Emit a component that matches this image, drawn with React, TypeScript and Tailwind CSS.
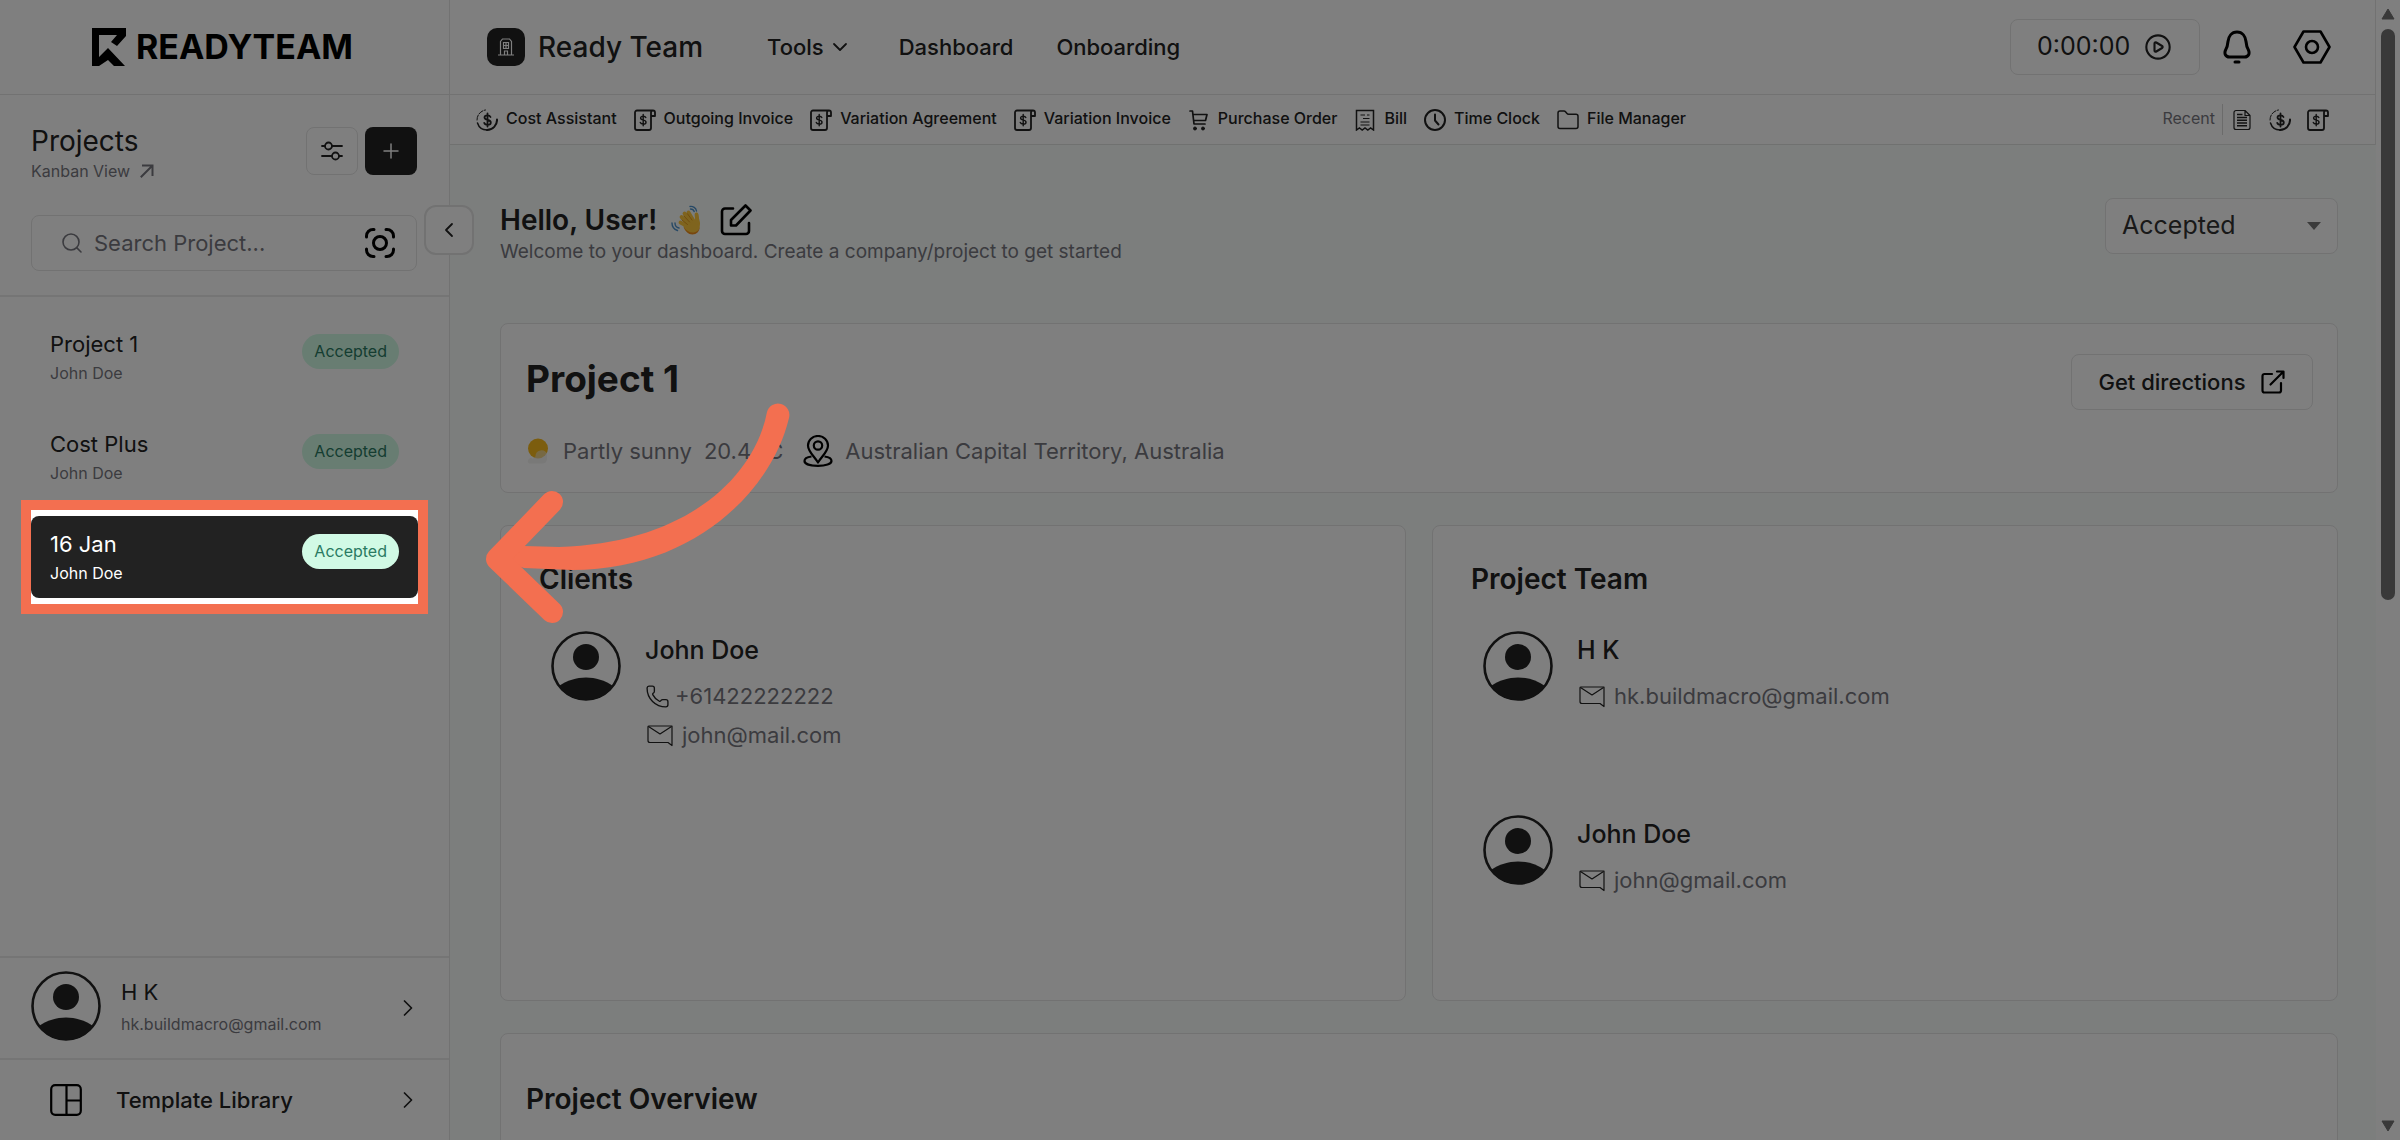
import { ChevronDown, ChevronLeft, ChevronRight, CirclePlay, Phone, Plus, Search } from "lucide-react";
import { clsx } from "clsx";

type IconProps = { className?: string };

const Icons = {
  Logo: ({ className }: IconProps) => (
    <svg viewBox="0 0 34 38" className={className} fill="currentColor">
      <path d="M0 0H34V8L25 18L19 14L25 7H7V29L16 20L33 38H22L16 32L7 38H0Z" />
    </svg>
  ),
  Building: ({ className }: IconProps) => (
    <svg viewBox="0 0 16 18" className={className} fill="none" stroke="currentColor" strokeWidth="1.2">
      <path d="M0 17H16M2.5 17V3.5L4.500 1H11.5L13.500 3.500V17M6.500 17V13H9.500V17M5 4.500H11M5 7.500H11M5 10.500H11M5.500 4V11M8 4V11M10.500 4V11" />
    </svg>
  ),
  ArrowUpRight: ({ className }: IconProps) => (
    <svg viewBox="0 0 14 14" className={className} fill="none" stroke="currentColor" strokeWidth="2" strokeLinecap="square">
      <path d="M1.500 12.500L12 2M3 1.500H12.500V11" />
    </svg>
  ),
  Sliders: ({ className }: IconProps) => (
    <svg viewBox="0 0 22 20" className={className} fill="none" stroke="currentColor" strokeWidth="1.8" strokeLinecap="round">
      <path d="M1 5H4M11 5H21M1 15H11M18 15H21" />
      <circle cx="7.500" cy="5" r="3.500" />
      <circle cx="14.500" cy="15" r="3.500" />
    </svg>
  ),
  Scan: ({ className }: IconProps) => (
    <svg viewBox="0 0 30 30" className={className} fill="none" stroke="currentColor" strokeWidth="3" strokeLinecap="round">
      <path d="M1.500 9V8A6.500 6.500 0 0 1 8 1.500H9M21 1.500H22A6.500 6.500 0 0 1 28.500 8V9M28.500 21V22A6.500 6.500 0 0 1 22 28.500H21M9 28.500H8A6.500 6.500 0 0 1 1.500 22V21" />
      <circle cx="15" cy="15" r="6.500" />
    </svg>
  ),
  Cost: ({ className }: IconProps) => (
    <svg viewBox="0 0 22 22" className={className} fill="none" stroke="currentColor" strokeLinecap="round">
      <path d="M21 10.500A10 10 0 0 1 11 21" strokeWidth="2" />
      <path d="M11 21A10 10 0 0 1 1.500 14" strokeWidth="1.500" />
      <path d="M1 11A10 10 0 0 1 9.500 1" strokeWidth="1" strokeDasharray="5 1.500" />
      <path d="M14.500 8C14 6.800 13 6.300 11.500 6.300C9.800 6.300 8.500 7 8.500 8.600C8.500 12 14.800 10 14.800 13.400C14.800 15 13.300 15.800 11.500 15.800C9.900 15.800 8.600 15.100 8.200 13.800M11.500 4.500V17.500" strokeWidth="1.800" />
    </svg>
  ),
  Invoice: ({ className }: IconProps) => (
    <svg viewBox="0 0 22 22" className={className} fill="none" stroke="currentColor" strokeLinecap="round" strokeLinejoin="round">
      <path d="M19 1.500H3A2 2 0 0 0 1 3.500V19A2 2 0 0 0 3 21H15A2 2 0 0 0 17 19V3.500A2 2 0 0 1 21 3.500V7H17" strokeWidth="1.800" />
      <path d="M11.800 8.500C11.400 7.500 10.500 7.200 9.200 7.200C7.700 7.200 6.600 7.900 6.600 9.100C6.600 12 12 10.300 12 13.200C12 14.500 10.700 15.100 9.200 15.100C7.800 15.100 6.700 14.600 6.300 13.500M9.200 5.500V16.800" strokeWidth="1.400" />
    </svg>
  ),
  Cart: ({ className }: IconProps) => (
    <svg viewBox="0 0 22 22" className={className} fill="none" stroke="currentColor" strokeLinecap="round" strokeLinejoin="round">
      <path d="M2 2H4.500L6 15H17M5 5.500H19L17.500 11.500H6" strokeWidth="1.700" />
      <circle cx="7" cy="19.500" r="1.500" fill="currentColor" />
      <circle cx="15" cy="19.500" r="1.500" fill="currentColor" />
    </svg>
  ),
  Bill: ({ className }: IconProps) => (
    <svg viewBox="0 0 22 22" className={className} fill="none" stroke="currentColor" strokeWidth="1.500">
      <path d="M2.500 21V1.500H19.500V21L16.600 19L13.800 21L11 19L8.200 21L5.400 19Z" />
      <path d="M6.500 6H11M9 9.500H15.500M6.500 13H15.500M13 6H15.500M6.500 16H15.500" strokeWidth="1.200" />
    </svg>
  ),
  Clock: ({ className }: IconProps) => (
    <svg viewBox="0 0 22 22" className={className} fill="none" stroke="currentColor" strokeWidth="2" strokeLinecap="round" strokeLinejoin="round">
      <circle cx="11" cy="11" r="10" />
      <path d="M11 5.500V11.500L14.500 15.500" />
    </svg>
  ),
  Folder: ({ className }: IconProps) => (
    <svg viewBox="0 0 22 22" className={className} fill="none" stroke="currentColor" strokeWidth="1.500" strokeLinejoin="round">
      <path d="M1 4A2 2 0 0 1 3 2H7A2 2 0 0 1 8.500 2.700L10 4.500A2 2 0 0 0 11.500 5.200H19A2 2 0 0 1 21 7.200V17.500A2 2 0 0 1 19 19.500H3A2 2 0 0 1 1 17.500Z" />
    </svg>
  ),
  Document: ({ className }: IconProps) => (
    <svg viewBox="0 0 18 22" className={className} fill="none" stroke="currentColor" strokeWidth="1.200" strokeLinejoin="round">
      <path d="M12 1.500H3A2 2 0 0 0 1 3.500V18.500A2 2 0 0 0 3 20.500H15A2 2 0 0 0 17 18.500V6.500ZM12 1.500V6.500H17" />
      <path d="M4 5.500H9.500M4 8.500H14M4 11.200H14M4 14H14M4 16.800H14" strokeWidth="1.500" />
    </svg>
  ),
  Bell: ({ className }: IconProps) => (
    <svg viewBox="0 0 28 34" className={className} fill="none" stroke="currentColor" strokeWidth="3" strokeLinecap="round" strokeLinejoin="round">
      <path d="M14 2C8.500 2 5.500 6.500 5 11.500C4.600 15.500 4.300 17 2.800 19.500C.800 23.500 2.500 27 6.500 27H21.500C25.500 27 27.200 23.500 25.200 19.500C23.700 17 23.400 15.500 23 11.500C22.500 6.500 19.500 2 14 2Z" />
      <path d="M12 32H16" />
    </svg>
  ),
  Settings: ({ className }: IconProps) => (
    <svg viewBox="0 0 38 34" className={className} fill="none" stroke="currentColor" strokeWidth="2.600" strokeLinejoin="round">
      <path d="M10.500 1.500H27.500L36.500 17L27.500 32.500H10.500L1.500 17Z" />
      <circle cx="19" cy="17" r="6" />
    </svg>
  ),
  Wave: ({ className }: IconProps) => (
    <svg viewBox="0 0 30 30" className={className} fill="none" strokeLinecap="round">
      <path d="M13 23C16 29.500 23 30.500 27 26C28.500 24 29 21 29 18L27 9C26 7 24.500 7.500 24.500 9.500V14L12 19Z" fill="#ffc83d" />
      <path d="M18 22L9.500 17.500M18 19L10.500 12M20 17L13.500 8.500M22 15L17.500 7.500M26.500 18L25.500 9.500" stroke="#ffc83d" strokeWidth="3.800" />
      <path d="M11 15L16.500 19.500M13 11L18.500 17M16.500 8.800L21 15" stroke="#e39a1c" strokeWidth="1" />
      <path d="M12.500 21.500C15 26 19 28 23 27.500C26 27 28 25 29 21.500C28.500 26.500 25.500 29.500 21.500 29.500C17.500 29.500 14 26 12.500 21.500Z" fill="#f08f1f" />
      <path d="M1 18C1 22 3.500 24.500 6.500 25.500M4 18C4 20.500 5.500 22.500 8 23M19 1.500C22 1 25 3 25.500 6M19.500 4C21.500 4 22.700 5 23.200 6.500" stroke="#4f93cc" strokeWidth="1.400" />
    </svg>
  ),
  Edit: ({ className }: IconProps) => (
    <svg viewBox="0 0 32 32" className={className} fill="none" stroke="currentColor" strokeWidth="2.600" strokeLinecap="round" strokeLinejoin="round">
      <path d="M13 4.500H5A3 3 0 0 0 2 7.500V27A3 3 0 0 0 5 30H26A3 3 0 0 0 29 27V19" />
      <path d="M11 21.500V16L25.500 1.500L30.500 6.500L16 21.500Z" />
    </svg>
  ),
  PartlySunny: ({ className }: IconProps) => (
    <svg viewBox="0 0 24 28" className={className}>
      <circle cx="12" cy="11.500" r="10" fill="#f8bb1c" />
      <path d="M3 26.500A3 3 0 0 1 7 22A4 4 0 0 1 9.500 19.500A6 6 0 0 1 21 17V22A5 5 0 0 1 16 26.500Z" fill="#e8e8e4" opacity="0.55" />
    </svg>
  ),
  Pin: ({ className }: IconProps) => (
    <svg viewBox="0 0 30 32" className={className} fill="none" stroke="currentColor" strokeWidth="2.200" strokeLinejoin="round">
      <path d="M15 27.500C11 21 5 16.500 5 10.500A10 9.500 0 0 1 25 10.500C25 16.500 19 21 15 27.500Z" />
      <circle cx="15" cy="10.500" r="4.200" />
      <path d="M8.500 21.500C4 22 1.500 23.800 1.500 26C1.500 29 7.500 30.800 15 30.800C22.500 30.800 28.500 29 28.500 26C28.500 23.800 26 22 21.500 21.500" />
    </svg>
  ),
  External: ({ className }: IconProps) => (
    <svg viewBox="0 0 24 24" className={className} fill="none" stroke="currentColor" strokeWidth="2.200" strokeLinecap="round" strokeLinejoin="round">
      <path d="M11 4H3.500A2 2 0 0 0 1.500 6V20.500A2 2 0 0 0 3.500 22.500H18A2 2 0 0 0 20 20.500V13" />
      <path d="M9.500 14.500L22 2M16 1.500H22.500V8" />
    </svg>
  ),
  Mail: ({ className }: IconProps) => (
    <svg viewBox="0 0 26 22" className={className} fill="none" stroke="currentColor" strokeWidth="1.200" strokeLinejoin="round">
      <path d="M25 1H2A1 1 0 0 0 1 2V15.500A2 2 0 0 0 3 17.500H21L25 20.500Z" />
      <path d="M1.500 1.500L13 9L24.500 1.500" />
    </svg>
  ),
  Template: ({ className }: IconProps) => (
    <svg viewBox="0 0 32 32" className={className} fill="none" stroke="currentColor" strokeWidth="2.200">
      <rect x="1.200" y="1.200" width="29.600" height="29.600" rx="4" />
      <path d="M16.500 1V31M16.500 16.500H31" />
    </svg>
  ),
};

const Avatar = ({ className }: IconProps) => (
  <svg viewBox="0 0 70 70" className={clsx("size-[70px] shrink-0 text-[#222]", className)} fill="currentColor">
    <circle cx="35" cy="35" r="33.500" fill="none" stroke="currentColor" strokeWidth="2.600" />
    <circle cx="35" cy="26" r="13" />
    <path d="M8 55C24 43.500 46 43.500 62 55C55 65 46 69 35 69C24 69 15 65 8 55Z" />
  </svg>
);

const projects = [
  { name: "Project 1", client: "John Doe", status: "Accepted" },
  { name: "Cost Plus", client: "John Doe", status: "Accepted" },
  { name: "16 Jan", client: "John Doe", status: "Accepted", active: true },
];

const shortcuts = [
  { label: "Cost Assistant", Icon: Icons.Cost },
  { label: "Outgoing Invoice", Icon: Icons.Invoice },
  { label: "Variation Agreement", Icon: Icons.Invoice },
  { label: "Variation Invoice", Icon: Icons.Invoice },
  { label: "Purchase Order", Icon: Icons.Cart },
  { label: "Bill", Icon: Icons.Bill },
  { label: "Time Clock", Icon: Icons.Clock },
  { label: "File Manager", Icon: Icons.Folder },
];

const recents = [
  { label: "Document", Icon: Icons.Document },
  { label: "Cost Assistant", Icon: Icons.Cost },
  { label: "Outgoing Invoice", Icon: Icons.Invoice },
];

// dims the whole page around the current project and points at it
const Spotlight = () => (
  <div className="pointer-events-none absolute -inset-x-[10px] -inset-y-4 z-50 border-10 border-[#f36f50] shadow-[0_0_0_4000px_rgba(0,0,0,0.5)]">
    <svg viewBox="0 0 308 226" className="absolute top-[-110px] left-[453px] h-[226px] w-[308px]">
      <path d="M283 12C271 75 205 143 75 147L40 146L13 159L40 168L88 170C210 170 288 90 305 18A11.200 11.200 0 0 0 283 12Z" fill="#f36f50" />
      <path d="M68 102L13 159L68 212" fill="none" stroke="#f36f50" strokeWidth="22" strokeLinecap="round" strokeLinejoin="round" />
    </svg>
  </div>
);

const Sidebar = () => (
  <aside className="relative z-10 flex w-[450px] shrink-0 flex-col border-r border-[#e4e4e4] bg-white">
    <div className="flex h-[95px] shrink-0 items-center justify-center gap-[10px] border-b border-[#e4e4e4] pr-1 text-black">
      <Icons.Logo className="h-[38px] w-[34px]" />
      <span className="text-[34px] leading-none font-bold">READYTEAM</span>
    </div>

    <div className="border-b-2 border-[#ebebeb] pt-8 pr-8 pb-6 pl-[31px]">
      <div className="flex justify-between">
        <div>
          <h2 className="text-[28px] leading-7">Projects</h2>
          <a href="#kanban" className="flex items-center gap-[10px] text-base leading-8 text-[#77777f]">
            Kanban View <Icons.ArrowUpRight className="size-[14px]" />
          </a>
        </div>
        <div className="flex items-start gap-[7px]">
          <button type="button" aria-label="Filter projects" className="flex h-12 w-[52px] items-center justify-center rounded-lg border border-[#e4e4e4]">
            <Icons.Sliders className="h-5 w-[22px]" />
          </button>
          <button type="button" aria-label="Add project" className="flex h-12 w-[52px] items-center justify-center rounded-lg bg-[#222] text-white">
            <Plus className="size-6" strokeWidth={1.5} />
          </button>
        </div>
      </div>
      <div className="mt-7 flex h-14 items-center gap-[10px] rounded-lg border border-[#e4e4e4] pr-[21px] pl-7">
        <Search className="size-6 shrink-0 text-[#77777f]" strokeWidth={1.6} />
        <input type="text" aria-label="Search Project" placeholder="Search Project..." className="min-w-0 flex-1 text-[22px] outline-none placeholder:text-[#77777f]" />
        <Icons.Scan className="size-[30px] shrink-0 text-black" />
      </div>
    </div>

    <button type="button" aria-label="Collapse sidebar" className="absolute top-[205px] -right-[25px] flex size-[50px] items-center justify-center rounded-xl border-2 border-[#e4e4e4] bg-white">
      <ChevronLeft className="size-6" strokeWidth={1.8} />
    </button>

    <ul className="flex flex-col gap-[18px] px-[31px] pt-[19px]">
      {projects.map((project) => (
        <li key={project.name} className="relative">
          <button
            type="button"
            className={clsx("flex w-full items-start justify-between rounded-lg px-[19px] py-3 text-left", project.active && "bg-[#222] text-white")}
          >
            <span>
              <span className="block text-[22px] leading-8">{project.name}</span>
              <span className={clsx("block text-base leading-[26px]", !project.active && "text-[#77777f]")}>{project.client}</span>
            </span>
            <span className="mt-[6px] rounded-full bg-[#d1fae5] px-3 text-base leading-[35px] text-[#2a7a62]">{project.status}</span>
          </button>
          {project.active && <Spotlight />}
        </li>
      ))}
    </ul>

    <div className="mt-auto">
      <a href="#account" className="flex h-[102px] items-center border-t-2 border-[#ebebeb] pr-[27px] pl-[31px]">
        <Avatar className="mr-5 mb-1" />
        <span className="flex-1">
          <span className="block text-[22px] leading-8">H K</span>
          <span className="block text-base leading-8 text-[#77777f]">hk.buildmacro@gmail.com</span>
        </span>
        <ChevronRight className="size-7" strokeWidth={1.5} />
      </a>
      <a href="#templates" className="flex h-[82px] items-center border-t-2 border-[#ebebeb] pr-[27px] pl-[50px]">
        <Icons.Template className="mr-[34px] size-8 text-black" />
        <span className="flex-1 text-[22px] font-medium">Template Library</span>
        <ChevronRight className="size-7" strokeWidth={1.5} />
      </a>
    </div>
  </aside>
);

const Header = () => (
  <header className="border-r border-[#e4e4e4] bg-white">
    <div className="flex h-[95px] items-center border-b border-[#e4e4e4] pr-[44px] pl-[37px]">
      <div className="flex items-center gap-[13px]">
        <span className="flex size-[38px] items-center justify-center rounded-[10px] bg-[#222] text-white">
          <Icons.Building className="h-[18px] w-4" />
        </span>
        <span className="text-[28px] font-medium">Ready Team</span>
      </div>
      <nav className="ml-16 flex items-center text-[22px] font-medium">
        <button type="button" className="flex items-center gap-1">
          Tools <ChevronDown className="size-6" strokeWidth={1.8} />
        </button>
        <a href="#dashboard" className="ml-[47px]">
          Dashboard
        </a>
        <a href="#onboarding" className="ml-[43px]">
          Onboarding
        </a>
      </nav>
      <div className="ml-auto flex items-center">
        <button type="button" className="flex h-14 w-[190px] items-center gap-[14px] rounded-lg border border-[#e4e4e4] pl-[26px] text-[25px]">
          0:00:00 <CirclePlay className="size-[28px]" strokeWidth={1.8} />
        </button>
        <button type="button" aria-label="Notifications" className="ml-[23px] text-black">
          <Icons.Bell className="h-[34px] w-7" />
        </button>
        <button type="button" aria-label="Settings" className="ml-[42px] text-black">
          <Icons.Settings className="h-[34px] w-[38px]" />
        </button>
      </div>
    </div>
    <div className="flex h-[50px] items-center justify-between border-b border-[#e0e2e1] pr-[46px] pl-[26px]">
      <ul className="flex items-center gap-[17px]">
        {shortcuts.map(({ label, Icon }) => (
          <li key={label}>
            <button type="button" className="flex items-center gap-2 text-base leading-5 font-medium whitespace-nowrap">
              <Icon className="size-[22px]" />
              <span className="pb-[3px]">{label}</span>
            </button>
          </li>
        ))}
      </ul>
      <div className="flex items-center">
        <span className="border-r border-[#d6d6d6] pr-[7px] pb-[3px] text-base leading-7 text-[#77777f]">Recent</span>
        <div className="ml-2 flex items-center gap-4">
          {recents.map(({ label, Icon }) => (
            <button type="button" key={label} aria-label={label}>
              <Icon className="size-[22px]" />
            </button>
          ))}
        </div>
      </div>
    </div>
  </header>
);

type Person = { name: string; phone?: string; email: string };

const PeopleCard = ({ title, people }: { title: string; people: Person[] }) => (
  <section className="h-[476px] rounded-lg border border-[#e4e4e4] bg-white pt-[35px] pl-[38px]">
    <h3 className="text-[28px] leading-9 font-semibold">{title}</h3>
    <ul className="pt-[34px] pl-3">
      {people.map((person) => (
        <li key={person.name} className="flex h-[184px] gap-6">
          <Avatar />
          <div>
            <p className="text-[25px] leading-[38px] font-medium">{person.name}</p>
            <div className="mt-2 text-[22px] leading-[39px] text-[#77777f]">
              {person.phone && (
                <p className="flex items-center gap-[5px]">
                  <Phone className="size-[25px] text-[#222]" strokeWidth={1.3} />
                  {person.phone}
                </p>
              )}
              <p className="flex items-center gap-[9px] pl-[2px]">
                <Icons.Mail className="h-[22px] w-[26px] text-[#222]" />
                {person.email}
              </p>
            </div>
          </div>
        </li>
      ))}
    </ul>
  </section>
);

const Dashboard = () => (
  <main className="flex-1 bg-[#f8fcfa] pr-[38px] pl-[50px]">
    <div className="flex items-start justify-between pt-[53px]">
      <div className="pt-1">
        <div className="flex items-center">
          <h1 className="text-[28px] leading-9 font-semibold">Hello, User!</h1>
          <Icons.Wave className="ml-[14px] size-[30px]" />
          <button type="button" aria-label="Edit dashboard" className="ml-[19px] text-black">
            <Icons.Edit className="size-8" />
          </button>
        </div>
        <p className="text-[19px] leading-7 text-[#77777f]">Welcome to your dashboard. Create a company/project to get started</p>
      </div>
      <div className="relative">
        <select aria-label="Project status" defaultValue="Accepted" className="h-14 w-[233px] appearance-none rounded-lg border border-[#e4e4e4] bg-white px-4 text-[25px] text-[#333]">
          <option>Accepted</option>
          <option>Pending</option>
          <option>Completed</option>
        </select>
        <svg viewBox="0 0 14 8" className="pointer-events-none absolute top-6 right-[17px] h-2 w-[14px]">
          <path d="M0 0H14L7 8Z" fill="#777" />
        </svg>
      </div>
    </div>

    <section className="mt-[57px] flex h-[170px] items-start justify-between rounded-lg border border-[#e4e4e4] bg-white pr-6 pl-[25px]">
      <div className="pt-[31px]">
        <h2 className="text-[37px] leading-[48px] font-bold">Project 1</h2>
        <div className="mt-8 flex items-center text-[22px] leading-8 text-[#77777f]">
          <Icons.PartlySunny className="mr-[13px] h-7 w-6" />
          <span>Partly sunny</span>
          <span className="ml-3">20.4 °C</span>
          <Icons.Pin className="mr-3 ml-5 h-8 w-[30px] text-black" />
          <span>Australian Capital Territory, Australia</span>
        </div>
      </div>
      <a href="#directions" className="mt-[30px] flex h-14 w-[242px] items-center justify-center gap-4 rounded-lg border border-[#e4e4e4] text-[22px] font-medium">
        Get directions
        <Icons.External className="size-6 text-black" />
      </a>
    </section>

    <div className="mt-8 grid grid-cols-2 gap-[26px]">
      <PeopleCard title="Clients" people={[{ name: "John Doe", phone: "+61422222222", email: "john@mail.com" }]} />
      <PeopleCard
        title="Project Team"
        people={[
          { name: "H K", email: "hk.buildmacro@gmail.com" },
          { name: "John Doe", email: "john@gmail.com" },
        ]}
      />
    </div>

    <section className="mt-8 h-[400px] rounded-lg border border-[#e4e4e4] bg-white px-[25px] pt-[47px]">
      <h2 className="text-[28px] leading-9 font-semibold">Project Overview</h2>
    </section>
  </main>
);

const ScrollTrack = () => (
  <div className="flex w-6 shrink-0 flex-col items-center bg-white py-2 text-[#727272]">
    <svg viewBox="0 0 14 12" className="h-3 w-[14px]" fill="currentColor">
      <path d="M7 1L13 11H1Z" stroke="currentColor" strokeLinejoin="round" />
    </svg>
    <div className="w-full flex-1 px-[5px] pt-[9px]">
      <div className="h-11/21 rounded-full bg-current" />
    </div>
    <svg viewBox="0 0 14 12" className="h-3 w-[14px]" fill="currentColor">
      <path d="M7 11L13 1H1Z" stroke="currentColor" strokeLinejoin="round" />
    </svg>
  </div>
);

export default function App() {
  return (
    <div className="flex h-screen overflow-hidden bg-white font-['Inter',sans-serif] text-[#222]">
      <Sidebar />
      <div className="flex min-w-0 flex-1 flex-col overflow-hidden">
        <Header />
        <Dashboard />
      </div>
      <ScrollTrack />
    </div>
  );
}
